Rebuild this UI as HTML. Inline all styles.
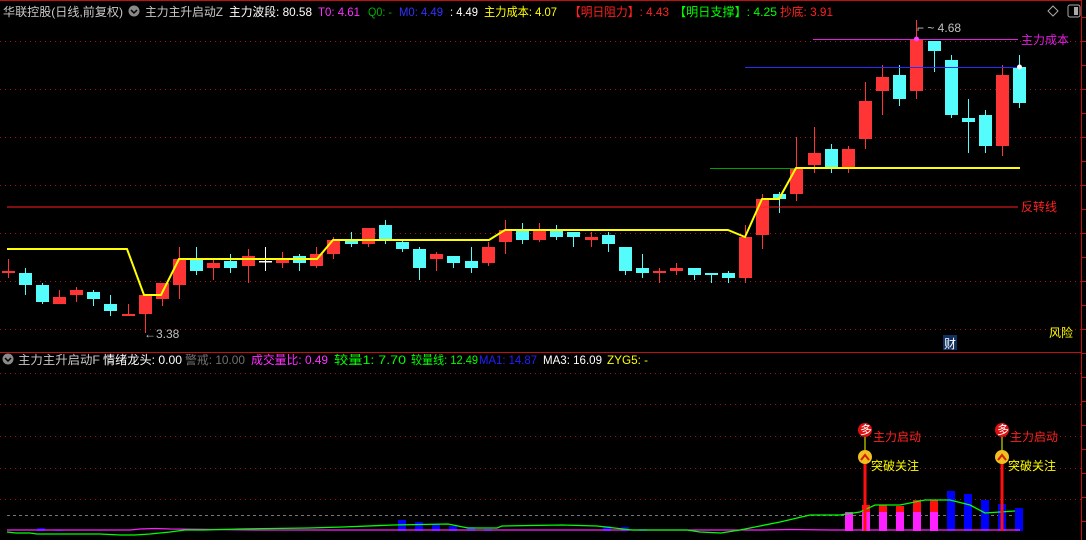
<!DOCTYPE html>
<html><head><meta charset="utf-8"><style>
html,body{margin:0;padding:0;background:#000;width:1086px;height:540px;overflow:hidden}
svg{display:block}
text{font-family:"Liberation Sans","Noto Sans CJK SC",sans-serif;font-size:12px}
</style></head><body>
<svg id="s" width="1086" height="540" xmlns="http://www.w3.org/2000/svg">
<rect width="1086" height="540" fill="#000"/>
<g id="grid"></g>
<g id="cand"></g>
<line x1="7" y1="207" x2="1018" y2="207" stroke="#ff2020" stroke-width="1"/>
<line x1="745" y1="67.5" x2="1018" y2="67.5" stroke="#2a2aff" stroke-width="1"/>
<line x1="813" y1="39.5" x2="1018" y2="39.5" stroke="#e020e0" stroke-width="1"/>
<line x1="710" y1="168.5" x2="795" y2="168.5" stroke="#00a000" stroke-width="1"/>
<polyline fill="none" stroke="#ffff00" stroke-width="2" points="7,249 127,249 144,295 161,295 179,259 317,259 333,240 489,240 505,230 728,230 745,237 762,199 779,199 796,168 1020,168"/>
<circle cx="916.5" cy="39" r="2.5" fill="#ff40ff"/>
<circle cx="1019.5" cy="67" r="2.5" fill="#fff"/>
<text x="917" y="32" fill="#c0c0c0" font-size="11">⌐ ~ 4.68</text>
<text x="144" y="338" fill="#c0c0c0" font-size="11">←3.38</text>
<text x="1021" y="44" fill="#e020e0">主力成本</text>
<text x="1021" y="211" fill="#ff2020">反转线</text>
<text x="1049" y="337" fill="#ffff00">风险</text>
<rect x="943" y="335" width="14" height="15" fill="#103060"/>
<text x="944" y="348" fill="#fff">财</text>
<line x1="1081.5" y1="0" x2="1081.5" y2="540" stroke="#c01010"/>
<line x1="0" y1="352.5" x2="1081" y2="352.5" stroke="#c01010"/>
<line x1="0" y1="0.5" x2="1081" y2="0.5" stroke="#c01010"/>
<g id="ticks"></g>
<text x="3" y="16" fill="#c8c8c8" textLength="120" lengthAdjust="spacingAndGlyphs">华联控股(日线,前复权)</text>
<circle cx="134" cy="11" r="5.5" fill="#8a8a8a"/><path d="M131 10 L134 13 L137 10" stroke="#000" stroke-width="1.5" fill="none"/>
<text x="145" y="16" fill="#c8c8c8" textLength="78" lengthAdjust="spacingAndGlyphs">主力主升启动Z</text>
<text x="229" y="16" fill="#fff" textLength="83" lengthAdjust="spacingAndGlyphs">主力波段: 80.58</text>
<text x="318" y="16" fill="#ff30ff" textLength="42" lengthAdjust="spacingAndGlyphs">T0: 4.61</text>
<text x="368" y="16" fill="#00b000" textLength="24" lengthAdjust="spacingAndGlyphs">Q0: -</text>
<text x="399" y="16" fill="#3030ff" textLength="44" lengthAdjust="spacingAndGlyphs">M0: 4.49</text>
<text x="450" y="16" fill="#fff" textLength="28" lengthAdjust="spacingAndGlyphs">: 4.49</text>
<text x="484" y="16" fill="#ffff00" textLength="73" lengthAdjust="spacingAndGlyphs">主力成本: 4.07</text>
<text x="569" y="16" fill="#ff2020" textLength="100" lengthAdjust="spacingAndGlyphs">【明日阻力】: 4.43</text>
<text x="674" y="16" fill="#00ff00" textLength="103" lengthAdjust="spacingAndGlyphs">【明日支撑】: 4.25</text>
<text x="780" y="16" fill="#ff2020" textLength="53" lengthAdjust="spacingAndGlyphs">抄底: 3.91</text>
<path d="M1053 6 L1058 11 L1053 16 L1048 11 Z" stroke="#aaa" fill="none"/>
<rect x="1068" y="5" width="12" height="12" rx="2" stroke="#aaa" fill="none"/><rect x="1074" y="7" width="4" height="8" fill="#aaa"/>
<circle cx="8" cy="359" r="5.5" fill="#8a8a8a"/><path d="M5 358 L8 361 L11 358" stroke="#000" stroke-width="1.5" fill="none"/>
<text x="18" y="364" fill="#c8c8c8" textLength="82" lengthAdjust="spacingAndGlyphs">主力主升启动F</text>
<text x="103" y="364" fill="#fff" textLength="79" lengthAdjust="spacingAndGlyphs">情绪龙头: 0.00</text>
<text x="185" y="364" fill="#707070" textLength="60" lengthAdjust="spacingAndGlyphs">警戒: 10.00</text>
<text x="251" y="364" fill="#ff30ff" textLength="77" lengthAdjust="spacingAndGlyphs">成交量比: 0.49</text>
<text x="334" y="364" fill="#00ff00" textLength="72" lengthAdjust="spacingAndGlyphs">较量1: 7.70</text>
<text x="411" y="364" fill="#00ff00" textLength="67" lengthAdjust="spacingAndGlyphs">较量线: 12.49</text>
<text x="479" y="364" fill="#2020ff" textLength="58" lengthAdjust="spacingAndGlyphs">MA1: 14.87</text>
<text x="543" y="364" fill="#fff" textLength="59" lengthAdjust="spacingAndGlyphs">MA3: 16.09</text>
<text x="607" y="364" fill="#ffff00" textLength="41" lengthAdjust="spacingAndGlyphs">ZYG5: -</text>
<line x1="7" y1="515.5" x2="1020" y2="515.5" stroke="#777" stroke-dasharray="3,3"/>
<g id="vol"></g>
<polyline fill="none" stroke="#ff20ff" stroke-width="1.3" points="7,530 130,530 140,529 155,528.5 170,529 260,530 380,530 500,530 600,530 680,530 740,530 760,530 790,529.5 830,530 900,530 1020,530"/>
<polyline fill="none" stroke="#00ff00" stroke-width="1.3" points="7,532 16,533 30,533 37,534 100,534 120,535 135,535 150,534 170,532 185,530 204,530 239,529 308,528 343,527 393,525 448,524 468,528 497,528 502,526 562,525 597,526 632,530 687,530 700,532 721,533 740,530 760,526 780,522 810,515 840,515 860,512 875,505 900,505 925,500 950,500 970,505 985,513 1000,512 1015,511"/>
<g id="sig"></g>
</svg>
<script>
var s='http://www.w3.org/2000/svg';
function el(p,t,a){var e=document.createElementNS(s,t);for(var k in a)e.setAttribute(k,a[k]);document.getElementById(p).appendChild(e);return e;}
[41,89,137,185,233,281,329,373,404,436,468,499].forEach(function(y){el('grid','line',{x1:0,x2:1081,y1:y+.5,y2:y+.5,stroke:'#a01818','stroke-dasharray':'1,4'});});
for(var y=17;y<540;y+=24){el('ticks','line',{x1:1081,x2:1086,y1:y+.5,y2:y+.5,stroke:'#c01010'});}
var C=[['r',271,273,259,278],['c',273,285,268,295],['c',285,302,283,304],['r',297,304,290,304],['r',290,295,287,302],['c',292,299,290,306],['c',304,311,295,316],['r',314,316,304,316],['r',295,314,295,333],['r',283,299,283,306],
['r',259,285,247,299],['c',259,271,247,275],['r',263,268,260,280],['c',261,268,254,273],['r',256,266,249,283],['w',261,262,247,271],['r',259,263,252,268],['c',256,263,254,271],['r',254,266,247,268],['r',240,254,237,259],
['c',240,244,232,247],['r',228,244,228,247],['c',225,239,220,244],['c',242,249,241,252],['c',249,268,247,280],['r',254,259,252,271],['c',256,263,256,268],['c',261,268,247,273],['r',247,263,242,266],['r',230,242,220,254],
['c',230,240,223,244],['r',230,240,223,242],['c',230,237,225,240],['c',232,237,232,247],['r',237,240,232,247],['c',235,244,232,252],['c',247,271,247,275],['c',268,273,254,278],['r',271,273,268,283],['r',268,271,263,275],
['c',268,275,268,280],['c',273,275,273,283],['c',273,278,271,283],['r',237,278,225,283],['r',199,235,194,249],['c',194,199,192,213],['r',169,194,137,201],['r',153,165,127,173],['c',149,167,144,173],['r',149,167,146,173],
['r',101,139,82,149],['r',77,91,65,115],['c',75,99,65,106],['r',40,91,20,99],['c',41,51,41,72],['c',60,115,55,118],['c',118,122,99,153],['c',115,146,110,153],['r',75,146,65,156],['c',67,103,55,108]];
var col={r:'#ff3434',c:'#54fcfc',w:'#ffffff'};
C.forEach(function(d,i){var x=Math.round(7.5+17.15*i);var c=col[d[0]];
el('cand','line',{x1:x+.5,x2:x+.5,y1:d[3],y2:d[4],stroke:c,'stroke-width':1});
var h=Math.max(d[2]-d[1],1.5);
el('cand','rect',{x:x-6,y:d[1],width:13,height:h,fill:c});});
function bar(x,top,c,w){el('vol','rect',{x:x,y:top,width:w||8,height:531-top,fill:c});}
[[37,528],[55,530],[398,520],[415,522],[432,524],[449,526],[467,527],[484,529],[603,526],[621,527],[639,529]].forEach(function(b){bar(b[0],b[1],'#0000ff');});
bar(845,512,'#ff20ff');
[[862,505],[879,505],[896,506],[913,500],[930,500]].forEach(function(b){bar(b[0],b[1],'#ff1010');bar(b[0],512,'#ff20ff');});
[[947,491],[964,494],[981,500],[998,504],[1015,508]].forEach(function(b){bar(b[0],b[1],'#0000ff');});
[865,1002].forEach(function(x){
el('sig','rect',{x:x-1.5,y:458,width:3,height:73,fill:'#ff1010'});
el('sig','line',{x1:x,x2:x,y1:436,y2:452,stroke:'#ffff00'});
el('sig','circle',{cx:x,cy:430,r:7,fill:'#e01010'});
var t=el('sig','text',{x:x-5,y:434,fill:'#fff','font-size':'10'});t.textContent='多';
el('sig','circle',{cx:x,cy:457,r:7,fill:'#f0c020'});
el('sig','path',{d:'M'+(x-4)+' 460 L'+x+' 455 L'+(x+4)+' 460',stroke:'#d02000','stroke-width':2,fill:'none'});
var a=el('sig','text',{x:x+8,y:441,fill:'#ff2020'});a.textContent='主力启动';
var b=el('sig','text',{x:x+6,y:470,fill:'#ffff00'});b.textContent='突破关注';
});
</script>
</body></html>
